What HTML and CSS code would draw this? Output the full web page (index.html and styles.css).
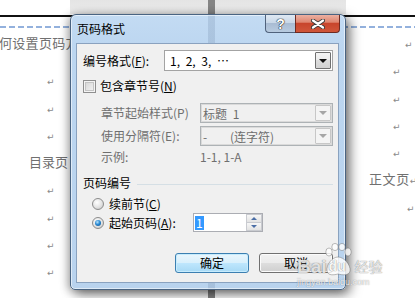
FILE: index.html
```html
<!DOCTYPE html>
<html lang="zh">
<head>
<meta charset="utf-8">
<title>页码格式</title>
<link rel="stylesheet" href="styles.css">
</head>
<body>
<div class="page">
  <div class="doc">
    <div class="hdr-rule"></div>
    <div class="hdr-dash"></div>
    <div class="cols">
      <div class="col-left">
        <div class="heading">何设置页码方式</div>
        <div class="line"><span class="pm l">↵</span></div>
        <div class="line"><span class="pm l">↵</span></div>
        <div class="line"><span class="pm l">↵</span></div>
        <div class="line"><span class="ptxt lt">目录页</span></div>
        <div class="line"><span class="pm l">↵</span></div>
        <div class="line"><span class="pm l">↵</span></div>
        <div class="line"><span class="pm l">↵</span></div>
        <div class="line"><span class="pm l">↵</span></div>
        <div class="line"><span class="pm l">↵</span></div>
      </div>
      <div class="col-right">
        <div class="line"><span class="pm r1">↵</span></div>
        <div class="line"><span class="pm r2">↵</span></div>
        <div class="line"><span class="pm r2">↵</span></div>
        <div class="line"><span class="pm r2">↵</span></div>
        <div class="line"><span class="pm r2">↵</span></div>
        <div class="line"><span class="ptxt rt">正文页</span><span class="pm">↵</span></div>
        <div class="line"><span class="pm r3">↵</span></div>
      </div>
    </div>
  </div>

  <div class="dialog">
    <div class="titlebar">
      <div class="title">页码格式</div>
      <div class="caption-btns">
        <div class="cbtn help"><span class="q">?</span></div>
        <div class="cbtn close">
          <svg width="14" height="10" viewBox="0 0 14 10">
            <path d="M2 1.5 L12 8.5 M12 1.5 L2 8.5" stroke="#3a3a3a" stroke-width="4" stroke-linecap="round"/>
            <path d="M2 1.5 L12 8.5 M12 1.5 L2 8.5" stroke="#ffffff" stroke-width="2.2" stroke-linecap="round"/>
          </svg>
        </div>
      </div>
    </div>
    <div class="client">
      <div class="row r-num">
        <span class="lbl w-num">编号格式(<u>F</u>):</span>
        <div class="combo">
          <span class="val">1, 2, 3, …</span>
          <span class="dd"><i class="arrow"></i></span>
        </div>
      </div>
      <div class="row r-check">
        <span class="checkbox"></span>
        <span class="lbl">包含章节号(<u>N</u>)</span>
      </div>
      <div class="indent">
        <div class="row r-sub first">
          <span class="lbl dis w-sub">章节起始样式(P)</span>
          <div class="combo disabled">
            <span class="val">标题 1</span>
            <span class="dd"><i class="arrow"></i></span>
          </div>
        </div>
        <div class="row r-sub">
          <span class="lbl dis w-sub">使用分隔符(E):</span>
          <div class="combo disabled">
            <span class="val">-&nbsp;&nbsp;&nbsp;&nbsp;(连字符)</span>
            <span class="dd"><i class="arrow"></i></span>
          </div>
        </div>
        <div class="row r-sub ex">
          <span class="lbl dis w-sub">示例:</span>
          <span class="lbl dis">1-1, 1-A</span>
        </div>
      </div>
      <div class="row r-group">
        <span class="lbl">页码编号</span>
        <span class="gline"></span>
      </div>
      <div class="row r-radio1">
        <span class="radio"></span>
        <span class="lbl">续前节(<u>C</u>)</span>
      </div>
      <div class="row r-radio2">
        <span class="radio on"></span>
        <span class="lbl w-start">起始页码(<u>A</u>):</span>
        <div class="spin">
          <span class="spin-val"><span class="sel">1</span></span>
          <span class="spin-btns">
            <span class="sb up"><i></i></span>
            <span class="sb down"><i></i></span>
          </span>
        </div>
      </div>
      <div class="row r-btns">
        <div class="btn default">确定</div>
        <div class="btn">取消</div>
      </div>
    </div>
  </div>

  <div class="watermark">
    <div class="wm-top">
      <span class="wm-bai">Bai</span>
      <span class="wm-paw">
        <svg width="28" height="34" viewBox="0 0 28 34">
          <g fill="rgba(255,255,255,0.8)" stroke="rgba(90,90,90,0.4)" stroke-width="1">
            <ellipse cx="5" cy="9" rx="3.2" ry="4"/>
            <ellipse cx="11" cy="4" rx="3.2" ry="3.6"/>
            <ellipse cx="18" cy="4" rx="3.2" ry="3.6"/>
            <ellipse cx="24" cy="9" rx="3.2" ry="4"/>
            <path d="M14 14 C 8 14, 2 22, 3 28 C 4 33, 10 32, 14 31 C 18 32, 25 33, 26 28 C 27 22, 20 14, 14 14 Z"/>
          </g>
        </svg>
        <span class="wm-du">du</span>
      </span>
      <span class="wm-jy">经验</span>
    </div>
    <div class="wm-url">jingyan.baidu.com</div>
  </div>
</div>
</body>
</html>
```
FILE: styles.css
```css
* { box-sizing: border-box; }

body { margin: 0; }

.page {
  position: relative;
  width: 415px;
  height: 298px;
  overflow: hidden;
  font-family: "Noto Sans CJK SC", sans-serif;
  background:
    linear-gradient(#858585, #858585) 208px 0 / 7px 100% no-repeat,
    linear-gradient(#e4e4e4, #ececec) 70px 0 / 276px 14px no-repeat,
    #ffffff;
}

/* ---------- document behind ---------- */
.doc { display: flex; flex-direction: column; }

.hdr-rule { margin-top: 15px; height: 2px; background: #111; }

.hdr-dash {
  margin-top: 9px;
  height: 2px;
  background: repeating-linear-gradient(to right, #93b1dd 0 6px, transparent 6px 9px);
}

.cols { display: flex; justify-content: space-between; }

.col-left { width: 90px; }
.col-right { width: 70px; }

.line {
  height: 27.3px;
  line-height: 27.3px;
  white-space: nowrap;
  color: #7a7a7a;
}

.heading {
  margin-top: 1px;
  height: 28px;
  line-height: 28px;
  margin-bottom: 8.3px;
  margin-left: -1px;
  font-size: 13px;
  letter-spacing: 0.3px;
  color: #707070;
  white-space: nowrap;
}

.pm {
  font-family: "DejaVu Sans", sans-serif;
  font-size: 9px;
  color: #8a8a8a;
}

.ptxt { font-size: 13px; color: #707070; }

.pm.l { margin-left: 47px; }
.lt { margin-left: 29px; }
.pm.r1 { margin-left: 60px; }
.pm.r2 { margin-left: 48px; }
.rt { margin-left: 24px; letter-spacing: 0.6px; }
.pm.r3 { margin-left: 62px; }

/* ---------- dialog ---------- */
.dialog {
  position: absolute;
  left: 70px;
  top: 14px;
  width: 276px;
  height: 276px;
  display: flex;
  flex-direction: column;
  border: 1px solid #4a6482;
  border-radius: 6px 6px 5px 5px;
  background:
    linear-gradient(to right, transparent 137px, rgba(70, 95, 130, 0.16) 137px, rgba(70, 95, 130, 0.16) 144px, transparent 144px),
    linear-gradient(#c3dbf3 0%, #bcd6f0 12%, #b9d3ee 100%);
  box-shadow:
    inset 0 0 0 1px rgba(255, 255, 255, 0.55),
    4px 4px 12px rgba(0, 0, 0, 0.55),
    -3px 1px 8px rgba(0, 0, 0, 0.22);
  z-index: 1;
}

.titlebar {
  height: 28px;
  display: flex;
  align-items: flex-start;
  flex: none;
}

.title {
  margin: 6px 0 0 6px;
  font-size: 12px;
  line-height: 15px;
  color: #000;
}

.caption-btns {
  margin-left: auto;
  margin-right: 5px;
  display: flex;
}

.cbtn {
  height: 18px;
  display: flex;
  align-items: center;
  justify-content: center;
  border: 1px solid #50627c;
  border-top: none;
}

.help {
  width: 30px;
  border-right: none;
  border-radius: 0 0 0 4px;
  background: linear-gradient(#dfe8f2 0%, #c9d8e8 45%, #a9bcd3 50%, #b8cbe0 100%);
}

.help .q {
  font-family: "Liberation Sans", sans-serif;
  font-weight: bold;
  font-size: 14px;
  line-height: 14px;
  color: #fff;
  text-shadow: 0 0 1px #222, 0 0 1px #222, 0 0 1px #222;
}

.close {
  width: 45px;
  border-radius: 0 0 4px 0;
  border-color: #6e2b22;
  background: linear-gradient(#ebb0a2 0%, #df8670 42%, #c8452c 50%, #d0563a 100%);
}

.client {
  flex: 1;
  margin: 0 6px 6px 5px;
  border: 1px solid #8aa2bf;
  background: #f0f0f0;
  padding: 6px 5px 0 6px;
  display: flex;
  flex-direction: column;
  font-size: 12px;
  color: #000;
}

.row { display: flex; align-items: center; flex: none; }

.lbl { white-space: nowrap; line-height: 14px; }
.lbl u { text-decoration: underline; text-underline-offset: 1px; }
.lbl.dis { color: #6f6f6f; }

.w-num { width: 81px; }
.w-sub { width: 99px; }
.w-start { width: 84px; }

.r-num { height: 21px; }

.combo {
  flex: 1;
  height: 100%;
  display: flex;
  align-items: center;
  background: #fff;
  border: 1px solid #a3a3a3;
  padding: 0 1px 0 5px;
}

.combo .val { flex: 1; white-space: nowrap; word-spacing: 3px; }

.combo .dd {
  width: 16px;
  height: calc(100% - 2px);
  display: flex;
  align-items: center;
  justify-content: center;
  border: 1px solid #707070;
  border-radius: 1px;
  background: linear-gradient(#f4f4f4 0%, #ebebeb 50%, #dcdcdc 50%, #d2d2d2 100%);
}

.arrow {
  width: 0;
  height: 0;
  border-left: 4px solid transparent;
  border-right: 4px solid transparent;
  border-top: 4px solid #111;
}

.combo.disabled {
  background: #f0f0f0;
  border-color: #adb2b5;
  box-shadow: inset 0 0 0 1px #dadada;
  padding-left: 2px;
  color: #6d6d6d;
}

.combo.disabled .dd {
  border-color: #c7c7c7;
  background: #f4f4f4;
}

.combo.disabled .arrow { border-top-color: #a6a6a6; }

.r-check { margin-top: 7px; height: 16px; }

.checkbox {
  width: 13px;
  height: 13px;
  border: 1px solid #8f8f8f;
  background: linear-gradient(135deg, #d3d3d3, #f6f6f6);
  box-shadow: inset 0 0 0 1px #f4f4f4, inset 0 0 0 2px #c4c4c4;
  margin-right: 4px;
}

.indent { padding-left: 18px; display: flex; flex-direction: column; }

.r-sub { height: 20px; margin-top: 3px; }
.r-sub.first { margin-top: 9px; }
.r-sub.ex { margin-top: 1px; }

.r-group { margin-top: 8px; height: 16px; }

.gline {
  flex: 1;
  height: 1px;
  margin-left: 6px;
  margin-top: 2px;
  background: #d5dfe5;
}

.r-radio1 { margin-top: 4px; height: 17px; padding-left: 9px; }
.r-radio2 { margin-top: 1px; height: 19px; padding-left: 9px; }

.radio {
  width: 12px;
  height: 12px;
  border-radius: 50%;
  border: 1px solid #8c8c8c;
  background: radial-gradient(circle at 40% 35%, #ffffff 0%, #e2e2e2 55%, #bdbdbd 100%);
  margin-right: 5px;
  position: relative;
}

.radio.on::after {
  content: "";
  position: absolute;
  left: 2px;
  top: 2px;
  width: 6px;
  height: 6px;
  border-radius: 50%;
  background: radial-gradient(circle at 40% 35%, #b9e4fb 0%, #2a8ad4 45%, #0c4b86 100%);
}

.spin {
  width: 70px;
  height: 19px;
  display: flex;
  border: 1px solid #abadb3;
  background: #fff;
}

.spin-val { flex: 1; display: flex; align-items: center; padding-left: 1px; }

.sel {
  background: #3399ff;
  color: #fff;
  line-height: 14px;
  padding: 0 1px;
}

.spin-btns { width: 16px; display: flex; flex-direction: column; }

.sb {
  flex: 1;
  display: flex;
  align-items: center;
  justify-content: center;
  border: 1px solid #c9cbd0;
  background: linear-gradient(#f7f7f7, #e3e3e3);
}

.sb.down { border-top: none; }

.sb.up i {
  border-left: 3px solid transparent;
  border-right: 3px solid transparent;
  border-bottom: 3px solid #4b6ea6;
}

.sb.down i {
  border-left: 3px solid transparent;
  border-right: 3px solid transparent;
  border-top: 3px solid #4b6ea6;
}

.r-btns {
  margin-top: 21px;
  height: 20px;
  justify-content: flex-end;
  gap: 10px;
}

.btn {
  width: 74px;
  height: 20px;
  display: flex;
  align-items: center;
  justify-content: center;
  border: 1px solid #707070;
  border-radius: 3px;
  background: linear-gradient(#f2f2f2 0%, #ebebeb 48%, #dddddd 52%, #cfcfcf 100%);
  box-shadow: inset 0 0 0 1px #fbfbfb;
  line-height: 14px;
}

.btn.default {
  border-color: #3c7fb1;
  background: linear-gradient(#eaf6fd 0%, #d9f0fc 48%, #bee6fd 52%, #a7d9f5 100%);
  box-shadow: inset 0 0 0 1px #c7ecfd;
}

/* ---------- watermark ---------- */
.watermark {
  position: absolute;
  left: 297px;
  top: 241px;
  z-index: 2;
  display: flex;
  flex-direction: column;
  pointer-events: none;
}

.wm-top { display: flex; align-items: flex-end; height: 36px; }

.wm-bai,
.wm-du,
.wm-jy {
  color: rgba(255, 255, 255, 0.8);
  text-shadow: 0 0 1px rgba(60, 60, 60, 0.55), 0 0 1px rgba(60, 60, 60, 0.35);
}

.wm-bai {
  font-family: "Liberation Sans", sans-serif;
  font-weight: bold;
  font-size: 19px;
  line-height: 20px;
}

.wm-paw { position: relative; width: 28px; height: 34px; margin-left: -3px; }
.wm-paw svg { position: absolute; left: 0; top: 0; }

.wm-du {
  position: absolute;
  left: 5px;
  top: 15px;
  font-family: "Liberation Sans", sans-serif;
  font-weight: bold;
  font-size: 14px;
  line-height: 16px;
  color: rgba(255, 255, 255, 0.95);
}

.wm-jy {
  font-size: 14px;
  line-height: 18px;
  margin-left: 3px;
  margin-bottom: 2px;
}

.wm-url {
  font-family: "Liberation Sans", sans-serif;
  font-size: 9px;
  line-height: 10px;
  color: rgba(255, 255, 255, 0.85);
  text-shadow: 0 0 1px rgba(60, 60, 60, 0.6);
}
```
